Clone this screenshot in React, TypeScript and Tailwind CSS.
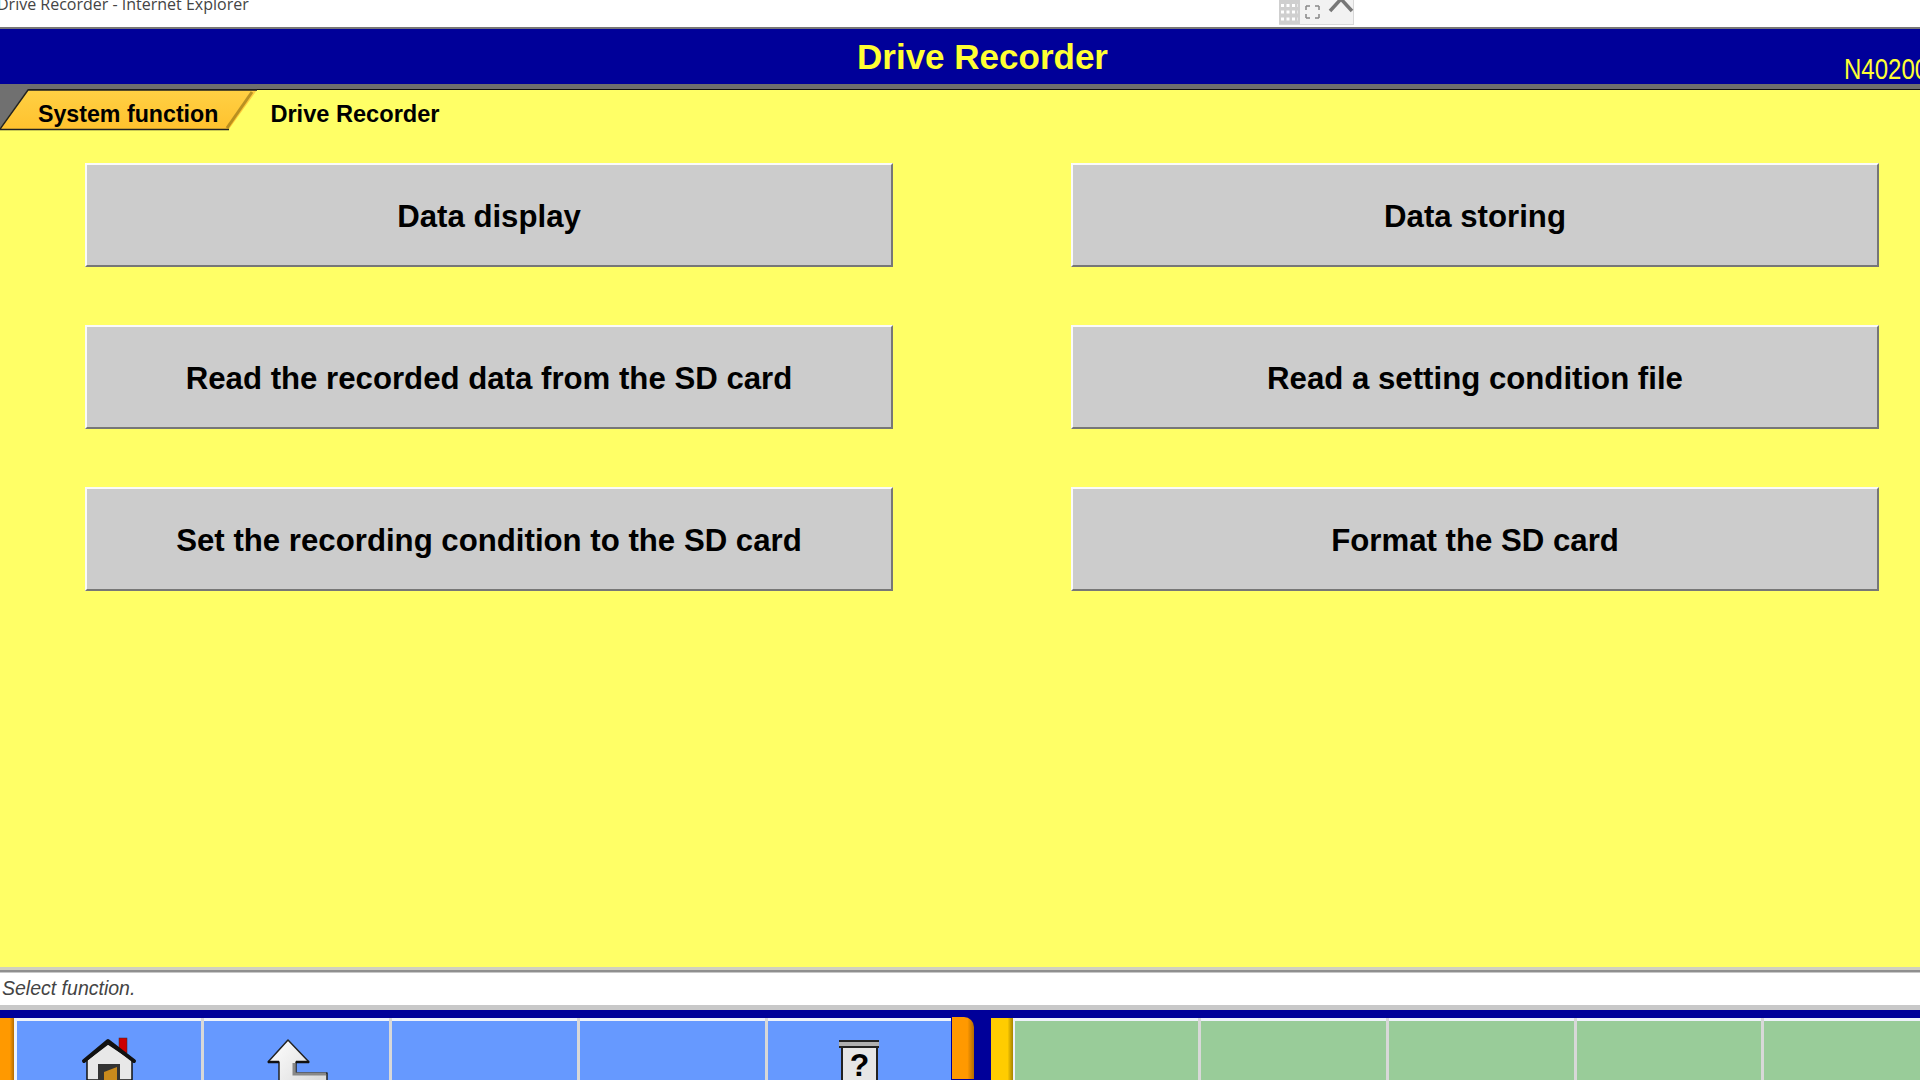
const buttons = [
  ["Data display", "Data storing"],
  ["Read the recorded data from the SD card", "Read a setting condition file"],
  ["Set the recording condition to the SD card", "Format the SD card"],
];

function Btn({ label }: { label: string }) {
  return (
    <button className="w-[808px] h-[104px] pt-[4px] bg-[#cccccc] border-[2px] border-t-[#fafafa] border-l-[#fafafa] border-r-[#777777] border-b-[#777777] text-[31.2px] leading-none font-bold text-black">
      {label}
    </button>
  );
}

function Home() {
  return (
    <svg width="56" height="44" viewBox="0 0 56 44">
      <rect x="38" y="2" width="8" height="15" fill="#cc0000" stroke="#333" strokeWidth="0.5" />
      <path d="M6 24 L27 8 L51 24 L51 44 L6 44 Z" fill="#e8e8e8" stroke="#111" strokeWidth="1.5" />
      <path d="M3 25 L27 5 L53 25" fill="none" stroke="#111" strokeWidth="4" strokeLinejoin="round" strokeLinecap="round" />
      <rect x="17" y="28" width="22" height="16" fill="#333" />
      <path d="M23 44 L23 36 L36 31 L36 44 Z" fill="#c98a1c" />
    </svg>
  );
}

function Back() {
  return (
    <svg width="62" height="44" viewBox="0 0 62 44">
      <defs>
        <linearGradient id="arrowFill" x1="0" y1="0" x2="1" y2="0.6">
          <stop offset="0" stopColor="#ffffff" />
          <stop offset="1" stopColor="#dcdcdc" />
        </linearGradient>
      </defs>
      <path d="M2 26 L22 4 L43 26 L30 26 L30 37 L61 37 L61 50 L13 50 L13 26 Z" fill="url(#arrowFill)" stroke="#222" strokeWidth="1.5" strokeLinejoin="round" />
      <path d="M2 26 L13 26 M30 26 L43 26" stroke="#111" strokeWidth="2.5" />
      <path d="M28 27 L28 38 L60 38" fill="none" stroke="#888" strokeWidth="3" />
    </svg>
  );
}

function Help() {
  return (
    <div className="relative w-[37px] h-[40px] bg-[#e6e6e6] border-x-[2px] border-[#222] flex items-start justify-center">
      <div className="absolute left-[-4px] top-0 w-[40px] h-[8px] bg-[#b0b0b0] border-y-[2px] border-[#222]" />
      <span className="mt-[9px] text-[32px] leading-none font-bold text-black">?</span>
    </div>
  );
}

function Cell({ color, w, children }: { color: string; w: string; children?: React.ReactNode }) {
  return (
    <div className={`${w} ${color} h-full shrink-0 border-t-[3px] border-t-[#eef2fa] flex items-end justify-center overflow-hidden`}>
      {children}
    </div>
  );
}

export default function App() {
  return (
    <div className="w-[1920px] h-[1080px] overflow-hidden flex flex-col bg-white font-['Liberation_Sans',Arial,sans-serif]">
      <div className="h-[27px] shrink-0 bg-white relative flex items-start overflow-hidden">
        <span className="-mt-[6px] -ml-[3px] text-[16px] leading-[20px] text-[#444] font-['Open_Sans',sans-serif] whitespace-nowrap">Drive Recorder - Internet Explorer</span>
        <div className="absolute left-[1279px] top-0 h-[25px] w-[75px] bg-[#f2f2f2] border-b border-r border-[#d8d8d8]">
          <svg width="75" height="25" viewBox="0 0 75 25">
            <rect x="0" y="0" width="21" height="24" fill="#cfcfcf" />
            <path d="M2 5.5h17M2 12h17M2 19h17" stroke="#fff" strokeWidth="3" strokeDasharray="3 2.5" />
            <path d="M27 6l4 0M27 6l0 4M40 6l-4 0M40 6l0 4M27 18l4 0M27 18l0 -4M40 18l-4 0M40 18l0 -4" stroke="#888" strokeWidth="1.5" />
            <path d="M51 11 L62 -1 L73 11" fill="none" stroke="#777" strokeWidth="3.5" />
          </svg>
        </div>
      </div>
      <div className="h-[2px] shrink-0 bg-[#777777]" />
      <div className="h-[55px] shrink-0 bg-[#000099] relative flex items-center justify-center">
        <span className="ml-[45px] text-[35px] leading-none font-bold text-[#ffff33] -mt-[1px]">Drive Recorder</span>
        <span className="absolute left-[1844px] top-[25px] text-[24px] leading-none text-[#ffff33] whitespace-nowrap origin-top scale-y-125">N40200</span>
      </div>
      <div className="h-[5px] shrink-0 bg-[#6e6e6e]" />
      <div className="h-[1px] shrink-0 bg-[#111]" />
      <div className="flex-1 min-h-0 bg-[#ffff66] flex flex-col relative">
        <div className="absolute left-0 top-[-6px]">
          <svg width="262" height="48" viewBox="0 0 262 48">
            <defs>
              <linearGradient id="tabFill" x1="0" y1="0" x2="0" y2="1">
                <stop offset="0" stopColor="#ffd044" />
                <stop offset="1" stopColor="#ffc22e" />
              </linearGradient>
            </defs>
            <path d="M0 0 H32 L0 44 Z" fill="#707070" />
            <path d="M0 45 L28 6 H257 L229 45 Z" fill="url(#tabFill)" />
            <path d="M0 45 L28 6 H257 M0 45.5 H229" fill="none" stroke="#222" strokeWidth="1.5" />
            <path d="M252 8 L227 44" fill="none" stroke="#8a6a10" strokeWidth="3" opacity="0.6" />
          </svg>
        </div>
        <div className="h-[46px] shrink-0 flex items-center relative">
          <span className="ml-[38px] mt-[4px] text-[23.2px] leading-none font-bold text-black">System function</span>
          <span className="ml-[52px] mt-[4px] text-[23.6px] leading-none font-bold text-black">Drive Recorder</span>
        </div>
        <div className="pl-[85px] pt-[27px] flex flex-col gap-[58px]">
          {buttons.map((row) => (
            <div key={row[0]} className="flex gap-[178px]">
              <Btn label={row[0]} />
              <Btn label={row[1]} />
            </div>
          ))}
        </div>
      </div>
      <div className="h-[6px] shrink-0 border-t-[3px] border-b-[1px] border-t-[#d0d0c0] border-b-[#c8c8c8] bg-[#8f8f8f]" />
      <div className="h-[32px] shrink-0 bg-white flex items-center pl-[2px]">
        <span className="text-[19.5px] leading-none italic text-[#444] -mt-[1px]">Select function.</span>
      </div>
      <div className="h-[5px] shrink-0 bg-[#c8c8c8]" />
      <div className="h-[70px] shrink-0 bg-[#000099] pt-[8px] flex">
        <div className="w-[14px] h-full bg-linear-to-r from-[#ff9900] from-70% to-[#b36b00] shrink-0" />
        <div className="w-[3px] bg-[#eef2fa] shrink-0" />
        <div className="flex gap-[3px] bg-[#d8d8d8] shrink-0">
          <Cell color="bg-[#6699ff]" w="w-[184px]"><Home /></Cell>
          <Cell color="bg-[#6699ff]" w="w-[185px]"><Back /></Cell>
          <Cell color="bg-[#6699ff]" w="w-[185px]" />
          <Cell color="bg-[#6699ff]" w="w-[185px]" />
          <Cell color="bg-[#6699ff]" w="w-[183px]"><Help /></Cell>
        </div>
        <div className="w-[22px] h-full bg-linear-to-r from-[#ff9900] from-70% to-[#b36b00] rounded-tr-[10px] shrink-0 ml-[1px] -mt-[1px]" />
        <div className="w-[17px] shrink-0" />
        <div className="w-[22px] h-full bg-linear-to-r from-[#ffcc00] from-75% to-[#a68400] shrink-0" />
        <div className="w-[2px] bg-[#eef2fa] shrink-0" />
        <div className="flex gap-[3px] bg-[#d8d8d8] flex-1">
          <Cell color="bg-[#99cc99]" w="w-[183px]" />
          <Cell color="bg-[#99cc99]" w="w-[185px]" />
          <Cell color="bg-[#99cc99]" w="w-[185px]" />
          <Cell color="bg-[#99cc99]" w="w-[184px]" />
          <Cell color="bg-[#99cc99]" w="flex-1" />
        </div>
      </div>
    </div>
  );
}
